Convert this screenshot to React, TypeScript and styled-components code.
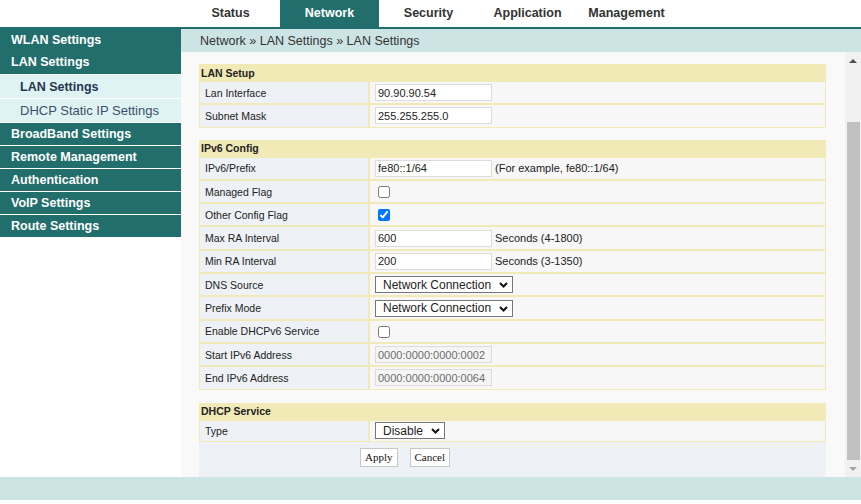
import React from 'react';
import styled, { createGlobalStyle } from 'styled-components';

const TEAL = '#216e6c';
const LIGHT_TEAL = '#cde4e5';
const KHAKI = '#f1e9b6';
const LABEL_BG = '#eef1f5';
const VALUE_BG = '#f7f7f7';

const GlobalStyle = createGlobalStyle`
  html, body { margin: 0; padding: 0; background: #fff; }
  body { font-family: "Liberation Sans", Arial, sans-serif; color: #222; }
  #root { width: 861px; height: 504px; overflow: hidden; }
  * { box-sizing: border-box; }
`;

const Page = styled.div`
  width: 861px;
  height: 504px;
  display: flex;
  flex-direction: column;
  background: #fff;
`;

const TopBar = styled.header`
  display: flex;
  height: 29px;
  padding-left: 181px;
  border-bottom: 2px solid ${TEAL};
`;

const Tab = styled.div<{ $active?: boolean }>`
  width: 99px;
  display: flex;
  align-items: center;
  justify-content: center;
  padding-bottom: 1px;
  font-weight: bold;
  font-size: 12.5px;
  color: ${(p) => (p.$active ? '#fff' : '#333')};
  background: ${(p) => (p.$active ? TEAL : 'transparent')};
`;

const Body = styled.div`
  display: flex;
  height: 448px;
`;

const Sidebar = styled.nav`
  width: 181px;
  flex-shrink: 0;
  display: flex;
  flex-direction: column;
`;

type NavKind = 'top' | 'open' | 'main' | 'sub' | 'subActive';

const NavItem = styled.div<{ $kind: NavKind }>`
  display: flex;
  align-items: center;
  height: ${(p) =>
    p.$kind === 'top' ? 21 : p.$kind === 'open' ? 25 : p.$kind === 'main' ? 23 : 24}px;
  padding-left: ${(p) => (p.$kind === 'sub' || p.$kind === 'subActive' ? 20 : 11)}px;
  border-bottom: ${(p) => (p.$kind === 'top' ? 'none' : '1px solid #fff')};
  background: ${(p) => (p.$kind === 'sub' || p.$kind === 'subActive' ? '#e0f3f3' : TEAL)};
  color: ${(p) =>
    p.$kind === 'sub' ? '#3b4f6b' : p.$kind === 'subActive' ? '#26354f' : '#fff'};
  font-size: ${(p) => (p.$kind === 'sub' ? 13 : 12.5)}px;
  font-weight: ${(p) => (p.$kind === 'sub' ? 'normal' : 'bold')};
  white-space: nowrap;
`;

const Main = styled.div`
  flex: 1;
  display: flex;
  flex-direction: column;
  min-width: 0;
`;

const Breadcrumb = styled.div`
  height: 23px;
  display: flex;
  align-items: center;
  padding-left: 19px;
  background: ${LIGHT_TEAL};
  font-size: 12.5px;
  color: #333;
`;

const ContentRow = styled.div`
  flex: 1;
  display: flex;
  min-height: 0;
`;

const Content = styled.div`
  flex: 1;
  background: #f9f9f9;
  padding: 12px 19px 0 18px;
  overflow: hidden;
`;

const Scrollbar = styled.div`
  width: 16px;
  background: #f1f1f1;
  display: flex;
  flex-direction: column;
  align-items: center;
`;

const ArrowBox = styled.div`
  height: 17px;
  width: 16px;
  display: flex;
  align-items: center;
  justify-content: center;
`;

const ArrowUp = styled.span`
  width: 0;
  height: 0;
  border-left: 4px solid transparent;
  border-right: 4px solid transparent;
  border-bottom: 4px solid #505050;
`;

const ArrowDown = styled.span`
  width: 0;
  height: 0;
  border-left: 4px solid transparent;
  border-right: 4px solid transparent;
  border-top: 4px solid #a3a3a3;
`;

const Thumb = styled.div`
  margin-top: 53px;
  width: 13px;
  height: 338px;
  background: #c1c1c1;
`;

const Spacer = styled.div`
  flex: 1;
`;

const Table = styled.table<{ $gap?: number }>`
  width: 100%;
  border-spacing: 0;
  border-collapse: separate;
  margin-bottom: ${(p) => p.$gap ?? 0}px;
`;

const HeadCell = styled.th`
  height: 17px;
  padding: 0 1px;
  background: ${KHAKI};
  border: 1px solid ${KHAKI};
  text-align: left;
  font-size: 10.5px;
  font-weight: bold;
  color: #222;
`;

const LabelCell = styled.td<{ $h?: number }>`
  width: 170px;
  height: ${(p) => p.$h ?? 23.3}px;
  padding: 0 5px;
  background: ${LABEL_BG};
  border: 1px solid ${KHAKI};
  font-size: 10.5px;
  color: #222;
  white-space: nowrap;
`;

const ValueCell = styled.td`
  padding: 0 5px;
  background: ${VALUE_BG};
  border: 1px solid ${KHAKI};
  font-size: 11px;
  color: #222;
  white-space: nowrap;
`;

const TextInput = styled.input`
  width: 117px;
  height: 17px;
  padding: 0 2px;
  margin: 0;
  border: 1px solid #dcdcdc;
  background: #fff;
  font-family: "Liberation Sans", Arial, sans-serif;
  font-size: 11px;
  color: #222;
  vertical-align: middle;
  outline: none;
  &:disabled {
    background: #f5f5f5;
    color: #6d6d6d;
  }
`;

const Hint = styled.span`
  margin-left: 3px;
  font-size: 11px;
  vertical-align: middle;
`;

const Check = styled.input`
  width: 12px;
  height: 12px;
  margin: 0 0 0 3px;
  vertical-align: middle;
`;

const SelectWrap = styled.span`
  position: relative;
  display: inline-block;
  vertical-align: middle;
`;

const Select = styled.select<{ $w: number }>`
  appearance: none;
  -webkit-appearance: none;
  width: ${(p) => p.$w}px;
  height: 17px;
  margin: 0;
  padding: 0 0 0 7px;
  border: 1px solid #767676;
  border-radius: 0;
  background: #fff;
  font-family: "Liberation Sans", Arial, sans-serif;
  font-size: 12px;
  color: #222;
  display: block;
`;

const Chevron = styled.svg`
  position: absolute;
  right: 5px;
  top: 6px;
  pointer-events: none;
`;

const ButtonBar = styled.div`
  height: 40px;
  background: ${LABEL_BG};
  display: flex;
  align-items: flex-start;
  gap: 12px;
  padding: 6px 0 0 161px;
`;

const Button = styled.button`
  height: 19px;
  padding: 0 4px;
  margin: 0;
  border: 1px solid #c8c8c8;
  background: #fff;
  font-family: "Liberation Serif", "Times New Roman", serif;
  font-size: 11px;
  color: #111;
`;

const Footer = styled.footer`
  height: 23px;
  background: ${LIGHT_TEAL};
`;

const tabs = ['Status', 'Network', 'Security', 'Application', 'Management'];

const navItems: { label: string; kind: NavKind }[] = [
  { label: 'WLAN Settings', kind: 'top' },
  { label: 'LAN Settings', kind: 'open' },
  { label: 'LAN Settings', kind: 'subActive' },
  { label: 'DHCP Static IP Settings', kind: 'sub' },
  { label: 'BroadBand Settings', kind: 'main' },
  { label: 'Remote Management', kind: 'main' },
  { label: 'Authentication', kind: 'main' },
  { label: 'VoIP Settings', kind: 'main' },
  { label: 'Route Settings', kind: 'main' },
];

const Dropdown: React.FC<{ value: string; width: number }> = ({ value, width }) => (
  <SelectWrap>
    <Select $w={width} defaultValue={value}>
      <option>{value}</option>
    </Select>
    <Chevron width="9" height="6" viewBox="0 0 9 6">
      <path d="M1 1 L4.5 4.5 L8 1" fill="none" stroke="#111" strokeWidth="2" />
    </Chevron>
  </SelectWrap>
);

export default function App() {
  return (
    <Page>
      <GlobalStyle />
      <TopBar>
        {tabs.map((t) => (
          <Tab key={t} $active={t === 'Network'}>
            {t}
          </Tab>
        ))}
      </TopBar>
      <Body>
        <Sidebar>
          {navItems.map((n, i) => (
            <NavItem key={i} $kind={n.kind}>
              {n.label}
            </NavItem>
          ))}
        </Sidebar>
        <Main>
          <Breadcrumb>Network » LAN Settings » LAN Settings</Breadcrumb>
          <ContentRow>
            <Content>
              <Table $gap={12}>
                <tbody>
                  <tr>
                    <HeadCell colSpan={2}>LAN Setup</HeadCell>
                  </tr>
                  <tr>
                    <LabelCell>Lan Interface</LabelCell>
                    <ValueCell>
                      <TextInput defaultValue="90.90.90.54" />
                    </ValueCell>
                  </tr>
                  <tr>
                    <LabelCell>Subnet Mask</LabelCell>
                    <ValueCell>
                      <TextInput defaultValue="255.255.255.0" />
                    </ValueCell>
                  </tr>
                </tbody>
              </Table>

              <Table $gap={13}>
                <tbody>
                  <tr>
                    <HeadCell colSpan={2}>IPv6 Config</HeadCell>
                  </tr>
                  <tr>
                    <LabelCell>IPv6/Prefix</LabelCell>
                    <ValueCell>
                      <TextInput defaultValue="fe80::1/64" />
                      <Hint>(For example, fe80::1/64)</Hint>
                    </ValueCell>
                  </tr>
                  <tr>
                    <LabelCell>Managed Flag</LabelCell>
                    <ValueCell>
                      <Check type="checkbox" />
                    </ValueCell>
                  </tr>
                  <tr>
                    <LabelCell>Other Config Flag</LabelCell>
                    <ValueCell>
                      <Check type="checkbox" defaultChecked />
                    </ValueCell>
                  </tr>
                  <tr>
                    <LabelCell>Max RA Interval</LabelCell>
                    <ValueCell>
                      <TextInput defaultValue="600" />
                      <Hint>Seconds (4-1800)</Hint>
                    </ValueCell>
                  </tr>
                  <tr>
                    <LabelCell>Min RA Interval</LabelCell>
                    <ValueCell>
                      <TextInput defaultValue="200" />
                      <Hint>Seconds (3-1350)</Hint>
                    </ValueCell>
                  </tr>
                  <tr>
                    <LabelCell>DNS Source</LabelCell>
                    <ValueCell>
                      <Dropdown value="Network Connection" width={138} />
                    </ValueCell>
                  </tr>
                  <tr>
                    <LabelCell>Prefix Mode</LabelCell>
                    <ValueCell>
                      <Dropdown value="Network Connection" width={138} />
                    </ValueCell>
                  </tr>
                  <tr>
                    <LabelCell>Enable DHCPv6 Service</LabelCell>
                    <ValueCell>
                      <Check type="checkbox" />
                    </ValueCell>
                  </tr>
                  <tr>
                    <LabelCell>Start IPv6 Address</LabelCell>
                    <ValueCell>
                      <TextInput disabled defaultValue="0000:0000:0000:0002" />
                    </ValueCell>
                  </tr>
                  <tr>
                    <LabelCell>End IPv6 Address</LabelCell>
                    <ValueCell>
                      <TextInput disabled defaultValue="0000:0000:0000:0064" />
                    </ValueCell>
                  </tr>
                </tbody>
              </Table>

              <Table>
                <tbody>
                  <tr>
                    <HeadCell colSpan={2}>DHCP Service</HeadCell>
                  </tr>
                  <tr>
                    <LabelCell $h={22}>Type</LabelCell>
                    <ValueCell>
                      <Dropdown value="Disable" width={70} />
                    </ValueCell>
                  </tr>
                </tbody>
              </Table>
              <ButtonBar>
                <Button>Apply</Button>
                <Button>Cancel</Button>
              </ButtonBar>
            </Content>
            <Scrollbar>
              <ArrowBox>
                <ArrowUp />
              </ArrowBox>
              <Thumb />
              <Spacer />
              <ArrowBox>
                <ArrowDown />
              </ArrowBox>
            </Scrollbar>
          </ContentRow>
        </Main>
      </Body>
      <Footer />
    </Page>
  );
}
